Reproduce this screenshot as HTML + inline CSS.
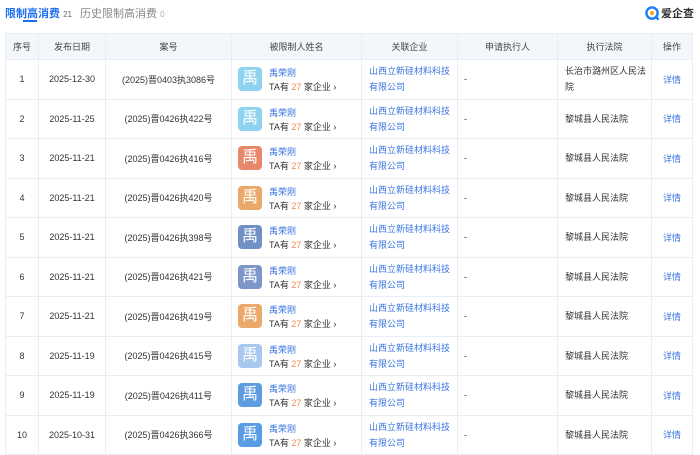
<!DOCTYPE html>
<html><head><meta charset="utf-8"><style>
*{margin:0;padding:0;box-sizing:border-box}
body{width:700px;height:452px;overflow:hidden;background:#fff;font-family:"Liberation Sans","Noto Sans CJK SC",sans-serif;font-size:9px;color:#333;position:relative}
.tab1{position:absolute;left:5px;top:5px;font-size:11px;color:#1c6ef0;font-weight:bold}
.tab1 small{font-size:8px;color:#666;font-weight:normal}
.ul{position:absolute;left:23px;top:20px;width:14px;height:2px;background:#1c6ef0}
.tab2{position:absolute;left:80px;top:5px;font-size:11px;color:#888}
.tab2 small{font-size:8px;color:#aaa}
.logo{position:absolute;left:645px;top:5px;font-size:11px;font-weight:bold;color:#333;display:flex;align-items:center}
table{position:absolute;left:5px;top:33px;border-collapse:collapse;table-layout:fixed;width:687px}
td,th{border:1px solid #e9eef6;text-align:center;font-weight:normal;vertical-align:middle;padding:0}
th{height:26px;background:#f3f7fc;color:#444}
td{height:39.5px}
.n{text-align:left;padding-left:5px;position:relative}
.av{position:absolute;left:6px;top:7px;width:24px;height:24px;border-radius:4px;color:#fff;font-size:16px;line-height:24px;text-align:center}
.nm{position:absolute;left:37px;top:6px;color:#3a74e0}
.ta{position:absolute;left:37px;top:20px;color:#333}
.ta b{color:#f08a4b;font-weight:normal}
.co{text-align:left;padding-left:7px;color:#3a74e0;line-height:16px}
.ap{text-align:left;padding-left:6px}
.ct{text-align:left;padding-left:7px;line-height:16px}
.d{color:#3a74e0}
</style></head><body>
<div class="tab1">限制高消费 <small>21</small></div><div class="ul"></div>
<div class="tab2">历史限制高消费 <small>0</small></div>
<div class="logo"><svg width="15" height="15" viewBox="0 0 16 16"><circle cx="7.5" cy="7.5" r="6" fill="none" stroke="#1a7ef5" stroke-width="2.6"/><circle cx="7.5" cy="7.5" r="2.3" fill="#f5a623"/><path d="M11 11l3.5 3.5" stroke="#1a7ef5" stroke-width="2.6"/></svg><span style="margin-left:1px">爱企查</span></div>
<table>
<colgroup><col style="width:33px"><col style="width:67px"><col style="width:126px"><col style="width:130px"><col style="width:96px"><col style="width:100px"><col style="width:94px"><col style="width:41px"></colgroup>
<tr><th>序号</th><th>发布日期</th><th>案号</th><th>被限制人姓名</th><th>关联企业</th><th>申请执行人</th><th>执行法院</th><th>操作</th></tr>
<tr><td>1</td><td>2025-12-30</td><td>(2025)晋0403执3086号</td><td class="n"><div class="av" style="background:#8fd3f0">禹</div><div class="nm">禹荣刚</div><div class="ta">TA有 <b>27</b> 家企业 ›</div></td><td class="co">山西立新硅材料科技<br>有限公司</td><td class="ap">-</td><td class="ct">长治市潞州区人民法<br>院</td><td class="d">详情</td></tr>
<tr><td>2</td><td>2025-11-25</td><td>(2025)晋0426执422号</td><td class="n"><div class="av" style="background:#8fd3f0">禹</div><div class="nm">禹荣刚</div><div class="ta">TA有 <b>27</b> 家企业 ›</div></td><td class="co">山西立新硅材料科技<br>有限公司</td><td class="ap">-</td><td class="ct">黎城县人民法院</td><td class="d">详情</td></tr>
<tr><td>3</td><td>2025-11-21</td><td>(2025)晋0426执416号</td><td class="n"><div class="av" style="background:#e8886a">禹</div><div class="nm">禹荣刚</div><div class="ta">TA有 <b>27</b> 家企业 ›</div></td><td class="co">山西立新硅材料科技<br>有限公司</td><td class="ap">-</td><td class="ct">黎城县人民法院</td><td class="d">详情</td></tr>
<tr><td>4</td><td>2025-11-21</td><td>(2025)晋0426执420号</td><td class="n"><div class="av" style="background:#eaa96b">禹</div><div class="nm">禹荣刚</div><div class="ta">TA有 <b>27</b> 家企业 ›</div></td><td class="co">山西立新硅材料科技<br>有限公司</td><td class="ap">-</td><td class="ct">黎城县人民法院</td><td class="d">详情</td></tr>
<tr><td>5</td><td>2025-11-21</td><td>(2025)晋0426执398号</td><td class="n"><div class="av" style="background:#7090c6">禹</div><div class="nm">禹荣刚</div><div class="ta">TA有 <b>27</b> 家企业 ›</div></td><td class="co">山西立新硅材料科技<br>有限公司</td><td class="ap">-</td><td class="ct">黎城县人民法院</td><td class="d">详情</td></tr>
<tr><td>6</td><td>2025-11-21</td><td>(2025)晋0426执421号</td><td class="n"><div class="av" style="background:#7c96c9">禹</div><div class="nm">禹荣刚</div><div class="ta">TA有 <b>27</b> 家企业 ›</div></td><td class="co">山西立新硅材料科技<br>有限公司</td><td class="ap">-</td><td class="ct">黎城县人民法院</td><td class="d">详情</td></tr>
<tr><td>7</td><td>2025-11-21</td><td>(2025)晋0426执419号</td><td class="n"><div class="av" style="background:#eaa96b">禹</div><div class="nm">禹荣刚</div><div class="ta">TA有 <b>27</b> 家企业 ›</div></td><td class="co">山西立新硅材料科技<br>有限公司</td><td class="ap">-</td><td class="ct">黎城县人民法院</td><td class="d">详情</td></tr>
<tr><td>8</td><td>2025-11-19</td><td>(2025)晋0426执415号</td><td class="n"><div class="av" style="background:#a8c7ee">禹</div><div class="nm">禹荣刚</div><div class="ta">TA有 <b>27</b> 家企业 ›</div></td><td class="co">山西立新硅材料科技<br>有限公司</td><td class="ap">-</td><td class="ct">黎城县人民法院</td><td class="d">详情</td></tr>
<tr><td>9</td><td>2025-11-19</td><td>(2025)晋0426执411号</td><td class="n"><div class="av" style="background:#5d9ce0">禹</div><div class="nm">禹荣刚</div><div class="ta">TA有 <b>27</b> 家企业 ›</div></td><td class="co">山西立新硅材料科技<br>有限公司</td><td class="ap">-</td><td class="ct">黎城县人民法院</td><td class="d">详情</td></tr>
<tr><td>10</td><td>2025-10-31</td><td>(2025)晋0426执366号</td><td class="n"><div class="av" style="background:#5a9be6">禹</div><div class="nm">禹荣刚</div><div class="ta">TA有 <b>27</b> 家企业 ›</div></td><td class="co">山西立新硅材料科技<br>有限公司</td><td class="ap">-</td><td class="ct">黎城县人民法院</td><td class="d">详情</td></tr>
</table>
</body></html>
